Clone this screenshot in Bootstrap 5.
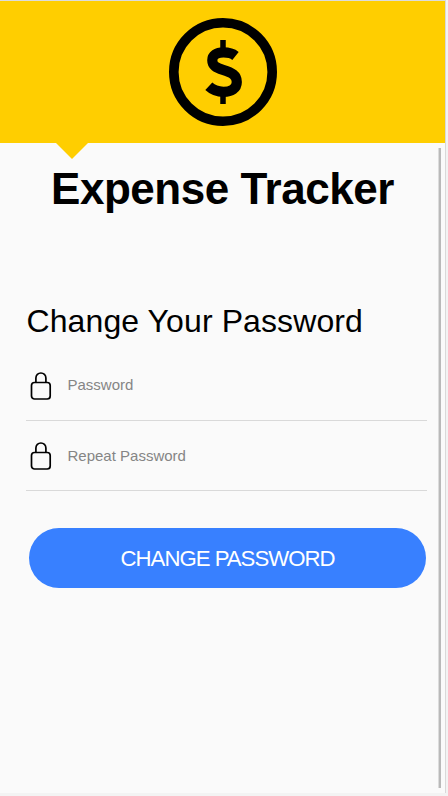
<!DOCTYPE html>
<html lang="en">
<head>
<meta charset="utf-8">
<meta name="viewport" content="width=device-width, initial-scale=1">
<title>Expense Tracker</title>
<link href="https://cdn.jsdelivr.net/npm/bootstrap@5.3.0/dist/css/bootstrap.min.css" rel="stylesheet">
<style>
body{font-family:"Liberation Sans",Arial,sans-serif;background:#f3f3f3;color:#000;height:796px;overflow:hidden}
.screen{width:446px;height:793px;background:#fafafa;border-top:1px solid #dcdcdc;border-right:1px solid #d9d9d9}
.brand-bar{height:142px;background:#ffce00;padding-top:17px}
.brand-bar::after{content:"";position:absolute;left:56px;top:100%;border:solid transparent;border-width:16.5px 16.5px 0;border-top-color:#ffce00}
.app-title{font-size:44px;line-height:50px;font-weight:700;letter-spacing:-.45px;margin:21px 0 0 51px;white-space:nowrap}
.form-area{margin:88px 18px 0 26px}
.form-title{font-size:32px;line-height:38px;font-weight:400;letter-spacing:.1px;margin:0 0 11px .5px}
.field-row{height:70px;border-bottom:1px solid #d9d9d9;padding-left:4px}
.field-row input{font-size:15px;line-height:20px;margin-left:15.5px;color:#000}
.field-row input::placeholder{color:#858585;opacity:1}
.first-field input{margin-bottom:2px}
.btn-change{width:397px;height:60px;margin:37px 0 0 3px;background:#3880ff;color:#fff;font-size:22.2px;letter-spacing:-1px;padding:2px 0 0;border:0}
.btn-change:hover{background:#3171e0;color:#fff}
.scroll-thumb{right:4px;top:147px;width:3px;height:640px;background:#b9b9b9;border-left:1px solid #dcdcdc}
</style>
</head>
<body>
<main class="screen position-relative">
  <header class="brand-bar position-relative text-center">
    <svg class="d-block mx-auto" width="108" height="108" viewBox="0 0 108 108" fill="none" stroke="#000">
      <circle cx="54" cy="54" r="49.2" stroke-width="9.6"/>
      <path d="M54 22V32M54 77V86" stroke-width="5.5"/>
      <path d="M66.500 37.900C63.500 35.500 59.500 34.400 54.500 34.400C47.500 34.400 43.300 37.300 43.300 42.300C43.300 47.700 47 49.600 54 51.900C62.800 54.600 67.800 57 67.800 64C67.800 70.500 62.500 73.800 54.500 73.800C48.500 73.800 43.500 71.800 39.800 68.300" stroke-width="10.200"/>
    </svg>
  </header>
  <h1 class="app-title">Expense Tracker</h1>
  <form class="form-area">
    <h2 class="form-title">Change Your Password</h2>
    <div class="field-row first-field d-flex align-items-center">
      <svg class="flex-shrink-0" width="22" height="28" viewBox="0 0 22 28" fill="none" stroke="#000" stroke-width="1.700"><rect x="1.500" y="10.500" width="18.700" height="16.500" rx="3"/><path d="M5.900 10.500V6A5 5 0 0 1 15.900 6V10.500"/></svg>
      <input class="form-control-plaintext p-0 border-0" type="password" placeholder="Password" aria-label="Password">
    </div>
    <div class="field-row d-flex align-items-center">
      <svg class="flex-shrink-0" width="22" height="28" viewBox="0 0 22 28" fill="none" stroke="#000" stroke-width="1.700"><rect x="1.500" y="10.500" width="18.700" height="16.500" rx="3"/><path d="M5.900 10.500V6A5 5 0 0 1 15.900 6V10.500"/></svg>
      <input class="form-control-plaintext p-0 border-0" type="password" placeholder="Repeat Password" aria-label="Repeat Password">
    </div>
    <button class="btn btn-change rounded-pill" type="button">CHANGE PASSWORD</button>
  </form>
  <div class="scroll-thumb position-absolute"></div>
</main>
<script src="https://cdn.jsdelivr.net/npm/bootstrap@5.3.0/dist/js/bootstrap.bundle.min.js"></script>
</body>
</html>
